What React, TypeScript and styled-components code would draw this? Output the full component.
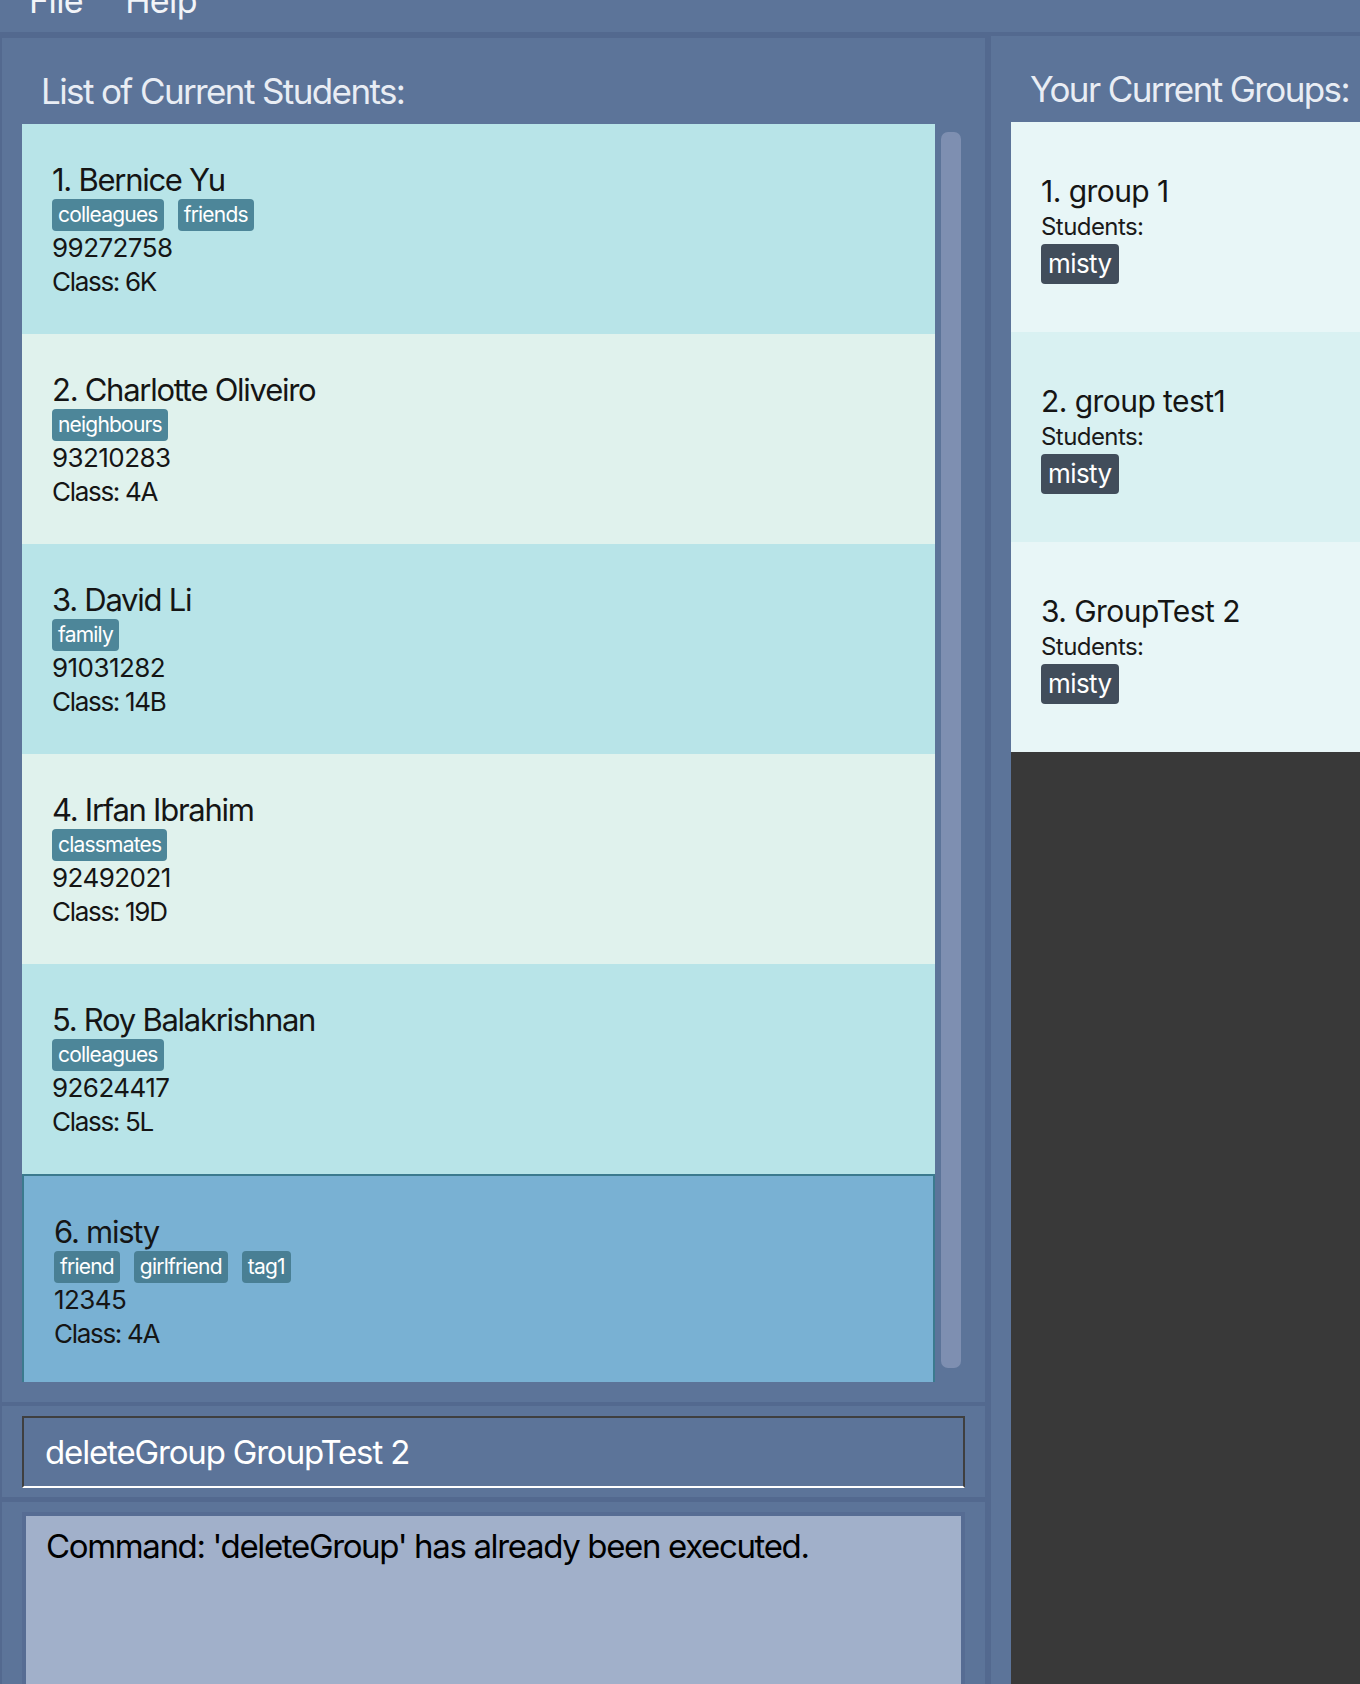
import React from "react";
import styled, { createGlobalStyle } from "styled-components";

const PANEL = "#5c7499";
const DARK_STRIP = "#53698f";
const FONT = `"Inter", "Noto Sans", "Liberation Sans", sans-serif`;

const Global = createGlobalStyle`
  html, body { margin: 0; padding: 0; background: ${PANEL}; }
  body { font-family: ${FONT}; overflow: hidden; }
  * { box-sizing: border-box; }
`;

const Window = styled.div`
  width: 1360px;
  height: 1684px;
  display: flex;
  flex-direction: column;
  background: ${PANEL};
  overflow: hidden;
  letter-spacing: -0.035em;
`;

const MenuBar = styled.div`
  height: 32px;
  flex: 0 0 32px;
  display: flex;
  padding-left: 8px;
  overflow: hidden;
  background: ${PANEL};
`;

const MenuItem = styled.div`
  font-size: 34px;
  line-height: 34px;
  margin-top: -16px;
  padding: 0 21px;
  color: #f2f4f8;
`;

const Main = styled.div`
  flex: 1;
  display: flex;
  min-height: 0;
  background: ${DARK_STRIP};
  padding-left: 2px;
`;

const LeftColumn = styled.div`
  width: 983px;
  flex: 0 0 983px;
  display: flex;
  flex-direction: column;
  margin-top: 6px;
`;

const RightColumn = styled.div`
  flex: 1;
  min-width: 0;
  margin-left: 6px;
  margin-top: 4px;
  display: flex;
  flex-direction: column;
  background: ${PANEL};
  padding: 36px 0 0 20px;
`;

const StudentPanel = styled.div`
  height: 1364px;
  flex: 0 0 1364px;
  background: ${PANEL};
  padding: 36px 24px 20px 20px;
  display: flex;
  flex-direction: column;
`;

const PanelTitle = styled.div`
  font-size: 35px;
  line-height: 35px;
  height: 35px;
  padding-left: 19px;
  margin-bottom: 15px;
  color: #e9edf4;
  letter-spacing: -0.046em;
  white-space: nowrap;
`;

const ListArea = styled.div`
  display: flex;
  flex: 1;
  min-height: 0;
`;

const CardColumn = styled.div`
  width: 913px;
  height: 1258px;
  overflow: hidden;
  display: flex;
  flex-direction: column;
`;

const ScrollTrack = styled.div`
  flex: 1;
  padding: 8px 0 14px 6px;
  display: flex;
`;

const ScrollThumb = styled.div`
  width: 20px;
  flex: 1;
  border-radius: 7px;
  background: #7e8fb1;
`;

const StudentCard = styled.div<{ $bg: string; $selected?: boolean }>`
  height: 210px;
  flex: 0 0 210px;
  background: ${(p) => p.$bg};
  border: ${(p) => (p.$selected ? "2px solid #3b7a8e" : "none")};
  padding: 38px 30px 0 30px;
  color: #151515;
`;

const Name = styled.div`
  font-size: 31px;
  line-height: 35px;
  height: 35px;
  letter-spacing: -0.041em;
  white-space: nowrap;
`;

const TagRow = styled.div`
  display: flex;
  gap: 14px;
  margin-top: 2px;
  height: 32px;
`;

const Tag = styled.span<{ $dim?: boolean }>`
  display: inline-block;
  height: 32px;
  line-height: 32px;
  padding: 0 6px;
  border-radius: 4px;
  background: ${(p) => (p.$dim ? "#497f94" : "#4d8699")};
  color: #ffffff;
  font-size: 21px;
  letter-spacing: -0.038em;
`;

const Phone = styled.div`
  font-size: 26px;
  line-height: 34px;
  height: 34px;
`;

const ClassLine = styled.div`
  font-size: 26px;
  line-height: 33px;
  height: 33px;
  letter-spacing: -0.05em;
`;

const CommandPanel = styled.div`
  height: 91px;
  flex: 0 0 91px;
  margin-top: 4px;
  background: ${PANEL};
  padding: 10px 20px 9px 20px;
`;

const CommandBox = styled.div`
  height: 72px;
  width: 943px;
  border: 2px solid #3f3f3f;
  border-bottom-color: #ffffff;
  background: ${PANEL};
  color: #ffffff;
  font-size: 33px;
  line-height: 68px;
  padding-left: 21px;
  letter-spacing: -0.035em;
  white-space: nowrap;
`;

const ResultPanel = styled.div`
  flex: 1;
  margin-top: 5px;
  background: ${PANEL};
  padding: 10px 20px 0 20px;
  display: flex;
`;

const ResultBox = styled.div`
  width: 943px;
  flex: 0 0 943px;
  height: 300px;
  border: 4px solid #566c93;
  border-bottom: none;
  background: #a1b0ca;
  color: #000000;
  font-size: 33px;
  line-height: 40px;
  padding: 10px 20px;
  letter-spacing: -0.041em;
  white-space: nowrap;
`;

const GroupList = styled.div`
  flex: 1;
  background: #393939;
  display: flex;
  flex-direction: column;
  overflow: hidden;
`;

const GroupCard = styled.div<{ $bg: string }>`
  height: 210px;
  flex: 0 0 210px;
  background: ${(p) => p.$bg};
  padding: 53px 30px 0 30px;
  color: #151515;
`;

const GroupName = styled.div`
  font-size: 30px;
  line-height: 32px;
  height: 32px;
  white-space: nowrap;
`;

const StudentsLabel = styled.div`
  font-size: 24px;
  line-height: 28px;
  height: 28px;
  margin-top: 6px;
  color: #1a1a1a;
`;

const MemberRow = styled.div`
  display: flex;
  gap: 10px;
  margin-top: 3px;
`;

const Member = styled.span`
  display: inline-block;
  height: 40px;
  line-height: 40px;
  padding: 0 7px;
  border-radius: 4px;
  background: #414d5b;
  color: #ffffff;
  font-size: 26px;
`;

type Student = { name: string; tags: string[]; phone: string; cls: string };

const students: Student[] = [
  { name: "Bernice Yu", tags: ["colleagues", "friends"], phone: "99272758", cls: "6K" },
  { name: "Charlotte Oliveiro", tags: ["neighbours"], phone: "93210283", cls: "4A" },
  { name: "David Li", tags: ["family"], phone: "91031282", cls: "14B" },
  { name: "Irfan Ibrahim", tags: ["classmates"], phone: "92492021", cls: "19D" },
  { name: "Roy Balakrishnan", tags: ["colleagues"], phone: "92624417", cls: "5L" },
  { name: "misty", tags: ["friend", "girlfriend", "tag1"], phone: "12345", cls: "4A" },
];

const groups = [
  { name: "group 1", members: ["misty"] },
  { name: "group test1", members: ["misty"] },
  { name: "GroupTest 2", members: ["misty"] },
];

const SELECTED = 5;

export default function App() {
  return (
    <>
      <Global />
      <Window>
        <MenuBar>
          <MenuItem>File</MenuItem>
          <MenuItem>Help</MenuItem>
        </MenuBar>
        <Main>
          <LeftColumn>
            <StudentPanel>
              <PanelTitle>List of Current Students:</PanelTitle>
              <ListArea>
                <CardColumn>
                  {students.map((s, i) => {
                    const selected = i === SELECTED;
                    const bg = selected ? "#79b1d3" : i % 2 === 0 ? "#b8e4e8" : "#e0f2ed";
                    return (
                      <StudentCard key={s.name} $bg={bg} $selected={selected}>
                        <Name>
                          {i + 1}. {s.name}
                        </Name>
                        <TagRow>
                          {s.tags.map((t) => (
                            <Tag key={t} $dim={selected}>
                              {t}
                            </Tag>
                          ))}
                        </TagRow>
                        <Phone>{s.phone}</Phone>
                        <ClassLine>Class: {s.cls}</ClassLine>
                      </StudentCard>
                    );
                  })}
                </CardColumn>
                <ScrollTrack>
                  <ScrollThumb />
                </ScrollTrack>
              </ListArea>
            </StudentPanel>
            <CommandPanel>
              <CommandBox>deleteGroup GroupTest 2</CommandBox>
            </CommandPanel>
            <ResultPanel>
              <ResultBox>Command: 'deleteGroup' has already been executed.</ResultBox>
            </ResultPanel>
          </LeftColumn>
          <RightColumn>
            <PanelTitle>Your Current Groups:</PanelTitle>
            <GroupList>
              {groups.map((g, i) => (
                <GroupCard key={g.name} $bg={i % 2 === 0 ? "#e8f6f7" : "#d9f1f2"}>
                  <GroupName>
                    {i + 1}. {g.name}
                  </GroupName>
                  <StudentsLabel>Students:</StudentsLabel>
                  <MemberRow>
                    {g.members.map((m) => (
                      <Member key={m}>{m}</Member>
                    ))}
                  </MemberRow>
                </GroupCard>
              ))}
            </GroupList>
          </RightColumn>
        </Main>
      </Window>
    </>
  );
}
